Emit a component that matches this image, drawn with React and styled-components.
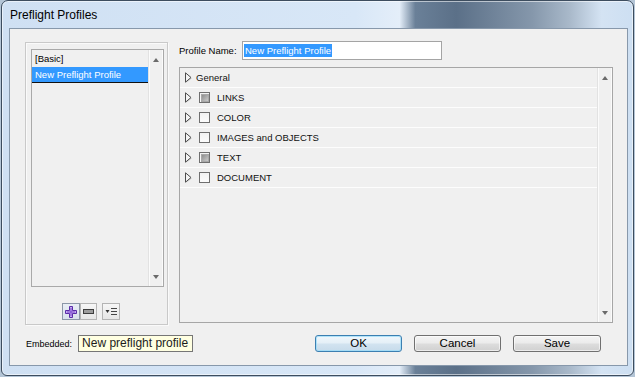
import styled, { createGlobalStyle } from "styled-components";

const Global = createGlobalStyle`
  html, body {
    margin: 0;
    padding: 0;
    background: #b4c5d6;
  }
  body {
    width: 635px;
    height: 377px;
    overflow: hidden;
    font-family: "Liberation Sans", Arial, sans-serif;
  }
  * {
    box-sizing: border-box;
  }
`;

const Window = styled.div`
  margin-left: 1px;
  width: 633px;
  height: 376px;
  border: 1px solid #3d4d5f;
  border-radius: 7px 7px 6px 6px;
  background: linear-gradient(
    90deg,
    #cfe0f3 0%,
    #d8e7f7 56%,
    #e4eef9 63%,
    #6a8098 65.5%,
    #5b7088 72%,
    #8597ab 84%,
    #a9b9ca 90%,
    #d4e3f3 95%,
    #cddff2 100%
  );
  box-shadow: inset 0 0 0 1px rgba(255, 255, 255, 0.55);
  display: flex;
  flex-direction: column;
  padding: 0 5px 9px 7px;
`;

const TitleBar = styled.div`
  height: 27px;
  line-height: 28px;
  padding-left: 1px;
  font-size: 12px;
  color: #000;
`;

const Content = styled.div`
  flex: 1;
  border: 1px solid #8798ab;
  background: #f0f0f0;
  padding: 12px 14px 0 15px;
  display: flex;
  flex-direction: column;
`;

const TopRow = styled.div`
  display: flex;
  gap: 11px;
`;

const ProfilesGroup = styled.div`
  margin-top: 1px;
  width: 143px;
  height: 283px;
  flex: none;
  border: 1px solid #c9c9c9;
  box-shadow: inset 1px 1px 0 #fafafa, 1px 1px 0 #fafafa;
  padding: 6px 0 0 5px;
  display: flex;
  flex-direction: column;
`;

const ListBox = styled.div`
  width: 133px;
  height: 238px;
  border: 1px solid #a9a9a9;
  display: flex;
`;

const ListItems = styled.div`
  flex: 1;
  display: flex;
  flex-direction: column;
  padding-top: 1px;
`;

const ListItem = styled.div`
  height: 16px;
  line-height: 15px;
  padding-left: 3px;
  font-size: 9.5px;
  color: ${(p) => (p.$selected ? "#fff" : "#000")};
  background: ${(p) => (p.$selected ? "#3399ff" : "transparent")};
  border-bottom: 1px solid ${(p) => (p.$selected ? "#111" : "transparent")};
`;

const ScrollBar = styled.div`
  width: 15px;
  flex: none;
  border-left: 1px solid #e2e2e2;
  box-shadow: inset 1px 0 0 #fbfbfb, inset -1px 0 0 #fbfbfb;
  display: flex;
  flex-direction: column;
  justify-content: space-between;
  align-items: center;
  padding: ${(p) => p.$pad};
`;

const Arrow = styled.div`
  width: 0;
  height: 0;
  border-left: 3.5px solid transparent;
  border-right: 3.5px solid transparent;
  ${(p) =>
    p.$down
      ? "border-top: 4px solid #6a6a6a;"
      : "border-bottom: 4px solid #6a6a6a;"}
`;

const ListTools = styled.div`
  display: flex;
  margin-top: 16px;
  padding-left: 31px;
`;

const ToolButton = styled.div`
  width: ${(p) => p.$w}px;
  height: 17px;
  margin-left: ${(p) => p.$ml || 0}px;
  border: 1px solid ${(p) => (p.$active ? "#8c97a8" : "#b4b4b4")};
  background: ${(p) =>
    p.$active
      ? "linear-gradient(#e9eef5, #d9e1ec)"
      : "linear-gradient(#f6f6f6, #e6e6e6)"};
  display: flex;
  align-items: center;
  justify-content: center;
`;

const RightCol = styled.div`
  width: 434px;
  flex: none;
  display: flex;
  flex-direction: column;
`;

const NameRow = styled.div`
  display: flex;
  align-items: center;
  height: 19px;
`;

const Label = styled.span`
  font-size: ${(p) => p.$size || 9.5}px;
  color: #000;
  width: ${(p) => (p.$w ? `${p.$w}px` : "auto")};
  margin-left: ${(p) => p.$ml || 0}px;
`;

const NameInput = styled.div`
  width: 200px;
  height: 19px;
  border: 1px solid #a4a4a4;
  background: #fff;
  padding: 1px 0 0 1px;
  font-size: 9.5px;
  line-height: 15px;
`;

const Highlight = styled.span`
  background: #3399ff;
  color: #fff;
  padding: 1px;
`;

const Tree = styled.div`
  margin-top: 7px;
  height: 256px;
  border: 1px solid #a6a6a6;
  display: flex;
`;

const TreeRows = styled.div`
  flex: 1;
  display: flex;
  flex-direction: column;
`;

const TreeRow = styled.div`
  height: 20px;
  border-bottom: 1px solid #fdfdfd;
  display: flex;
  align-items: center;
  padding-left: 4px;
  font-size: 9.5px;
  color: #111;
`;

const Expander = styled.span`
  width: 9px;
  height: 12px;
  flex: none;
  display: flex;
  margin-right: ${(p) => (p.$noBox ? 3 : 6)}px;
`;

const CheckBox = styled.div`
  width: 11px;
  height: 11px;
  flex: none;
  border: 1px solid #6f6f6f;
  background: linear-gradient(#f2f2f2, #fcfcfc);
  margin-right: 7px;
  display: flex;
  align-items: center;
  justify-content: center;
  &::after {
    content: "";
    display: ${(p) => (p.$mixed ? "block" : "none")};
    width: 6px;
    height: 6px;
    background: linear-gradient(135deg, #8e8e8e, #c9c9c9);
    border: 1px solid #a8a8a8;
  }
`;

const BottomRow = styled.div`
  display: flex;
  align-items: center;
  margin-top: 10px;
  height: 17px;
`;

const Tooltip = styled.div`
  margin-left: 6px;
  width: 115px;
  height: 17px;
  border: 1px solid #767676;
  background: #ffffe1;
  font-size: 12px;
  line-height: 14px;
  padding-left: 3px;
  color: #1c1c1c;
  white-space: nowrap;
`;

const Buttons = styled.div`
  margin-left: auto;
  margin-right: 12px;
  display: flex;
  gap: 12px;
`;

const Button = styled.div`
  width: ${(p) => p.$w}px;
  height: 17px;
  border: 1px solid ${(p) => (p.$default ? "#3c7fb1" : "#707070")};
  border-radius: 3px;
  background: ${(p) =>
    p.$default
      ? "linear-gradient(#f0f7fc 0%, #e4eff7 48%, #d2e3f0 52%, #c7dbeb 100%)"
      : "linear-gradient(#f4f4f4 0%, #ebebeb 48%, #dddddd 52%, #d0d0d0 100%)"};
  box-shadow: inset 0 0 0 1px
    ${(p) => (p.$default ? "rgba(150, 220, 250, 0.7)" : "rgba(255,255,255,0.6)")};
  font-size: 11.5px;
  line-height: 15px;
  text-align: center;
  color: #000;
`;

function TreeArrow() {
  return (
    <svg width="9" height="12" viewBox="0 0 9 12">
      <path d="M2.5 1.8 L8 6.3 L2.5 10.8 Z" fill="#c9c9c9" opacity="0.8" />
      <path d="M1.5 0.8 L7 5.5 L1.5 10.2 Z" fill="#f4f4f4" stroke="#4d4d4d" strokeWidth="1" />
    </svg>
  );
}

const sections = [
  { label: "General", box: false },
  { label: "LINKS", box: true, mixed: true },
  { label: "COLOR", box: true },
  { label: "IMAGES and OBJECTS", box: true },
  { label: "TEXT", box: true, mixed: true },
  { label: "DOCUMENT", box: true },
];

export default function App() {
  return (
    <>
      <Global />
      <Window>
        <TitleBar>Preflight Profiles</TitleBar>
        <Content>
          <TopRow>
            <ProfilesGroup>
              <ListBox>
                <ListItems>
                  <ListItem>[Basic]</ListItem>
                  <ListItem $selected>New Preflight Profile</ListItem>
                </ListItems>
                <ScrollBar $pad="8px 0 7px">
                  <Arrow />
                  <Arrow $down />
                </ScrollBar>
              </ListBox>
              <ListTools>
                <ToolButton $w={18} $active>
                  <svg width="12" height="12" viewBox="0 0 12 12">
                    <path
                      d="M4.5 0.5 H7.5 V4.5 H11.5 V7.5 H7.5 V11.5 H4.5 V7.5 H0.5 V4.5 H4.5 Z"
                      fill="#c3a8f0"
                      stroke="#5a2ca8"
                      strokeWidth="1"
                    />
                    <path d="M6 2 V10 M2 6 H10" stroke="#7a4bd0" strokeWidth="1" />
                  </svg>
                </ToolButton>
                <ToolButton $w={17}>
                  <svg width="11" height="6" viewBox="0 0 11 6">
                    <rect x="0.5" y="0.5" width="10" height="4" fill="#9c9c9c" stroke="#3d3d3d" />
                  </svg>
                </ToolButton>
                <ToolButton $w={18} $ml={5}>
                  <svg width="13" height="9" viewBox="0 0 13 9">
                    <path d="M0.5 3 H4.5 L2.5 6 Z" fill="#333" />
                    <path d="M6 1.5 H12 M6 4.5 H12 M6 7.5 H12" stroke="#444" strokeWidth="1" />
                  </svg>
                </ToolButton>
              </ListTools>
            </ProfilesGroup>

            <RightCol>
              <NameRow>
                <Label $w={63}>Profile Name:</Label>
                <NameInput>
                  <Highlight>New Preflight Profile</Highlight>
                </NameInput>
              </NameRow>
              <Tree>
                <TreeRows>
                  {sections.map((s) => (
                    <TreeRow key={s.label}>
                      <Expander $noBox={!s.box}>
                        <TreeArrow />
                      </Expander>
                      {s.box && <CheckBox $mixed={s.mixed} />}
                      {s.label}
                    </TreeRow>
                  ))}
                </TreeRows>
                <ScrollBar $pad="8px 0 7px">
                  <Arrow />
                  <Arrow $down />
                </ScrollBar>
              </Tree>
            </RightCol>
          </TopRow>

          <BottomRow>
            <Label $size={9} $ml={1}>
              Embedded:
            </Label>
            <Tooltip>New preflight profile</Tooltip>
            <Buttons>
              <Button $w={87} $default>
                OK
              </Button>
              <Button $w={87}>Cancel</Button>
              <Button $w={88}>Save</Button>
            </Buttons>
          </BottomRow>
        </Content>
      </Window>
    </>
  );
}
